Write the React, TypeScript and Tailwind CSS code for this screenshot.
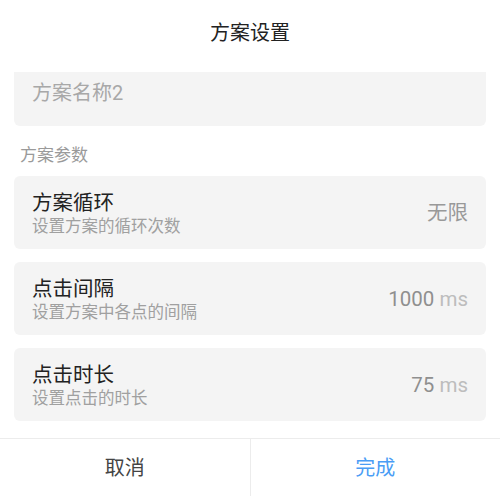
import React from "react";

const FONT = { fontFamily: 'Roboto, "Noto Sans CJK SC", sans-serif' };

function Row({ title, sub, value }: { title: string; sub: string; value: React.ReactNode }) {
  return (
    <div className="h-[73px] rounded-[6px] bg-[#f4f4f4] px-[18px] flex items-start justify-between">
      <div className="pt-[14px] flex flex-col">
        <div className="text-[20.5px] leading-[26px] text-[#222]">{title}</div>
        <div className="text-[16.5px] leading-[22px] text-[#a0a0a0]">{sub}</div>
      </div>
      <div className="self-center text-[20.5px] leading-[26px] text-[#999]">{value}</div>
    </div>
  );
}

export default function App() {
  return (
    <div className="w-[500px] h-[496px] bg-white flex flex-col overflow-hidden" style={FONT}>
      <div className="h-[72px] shrink-0 flex items-center justify-center pb-[6px]">
        <span className="text-[20px] leading-[28px] text-[#222]">方案设置</span>
      </div>
      <div className="flex-1 px-[14px] flex flex-col">
        <div className="h-[54px] rounded-b-[6px] bg-[#f4f4f4] px-[18px] flex items-center pb-[12px]">
          <span className="text-[20px] leading-[28px] text-[#a8a8a8]">方案名称2</span>
        </div>
        <div className="pt-[18px] pb-[10px] px-[6px] text-[17px] leading-[22px] text-[#9a9a9a]">方案参数</div>
        <div className="flex flex-col gap-[13px]">
          <Row title="方案循环" sub="设置方案的循环次数" value={<span className="text-[#999]">无限</span>} />
          <Row
            title="点击间隔"
            sub="设置方案中各点的间隔"
            value={
              <span>
                <span className="text-[#8f8f8f]">1000</span> <span className="text-[#bdbdbd]">ms</span>
              </span>
            }
          />
          <Row
            title="点击时长"
            sub="设置点击的时长"
            value={
              <span>
                <span className="text-[#8f8f8f]">75</span> <span className="text-[#bdbdbd]">ms</span>
              </span>
            }
          />
        </div>
      </div>
      <div className="h-[58px] shrink-0 border-t border-[#ececec] flex">
        <div className="flex-1 flex items-center justify-center border-r border-[#ececec] text-[20px] text-[#444]">取消</div>
        <div className="flex-1 flex items-center justify-center text-[20px] text-[#4a9df5]">完成</div>
      </div>
    </div>
  );
}
